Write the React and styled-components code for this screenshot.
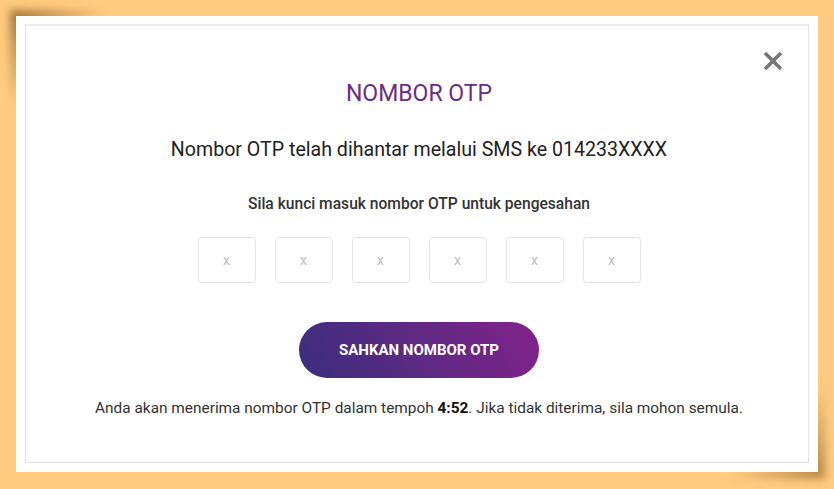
import styled, { createGlobalStyle } from 'styled-components';

const Global = createGlobalStyle`
    html, body {
        margin: 0;
        padding: 0;
        background: #ffcb80;
    }
    body {
        font-family: Roboto, "Liberation Sans", Arial, sans-serif;
    }
`;

const Page = styled.div`
    isolation: isolate;
    width: 834px;
    height: 489px;
    box-sizing: border-box;
    padding: 16px;
    background: #ffcb80;
`;

// white sheet with the lifted corners
const Card = styled.div`
    position: relative;
    width: 802px;
    height: 456px;
    box-sizing: border-box;
    padding: 8px 9px 9px 9px;
    background: #fff;

    &::before,
    &::after {
        content: '';
        position: absolute;
        width: 90px;
        height: 90px;
        z-index: -1;
        filter: blur(4px);
    }
    &::before {
        top: -6px;
        left: -6px;
        background: linear-gradient(135deg, rgba(110, 70, 15, 0.7) 0%, rgba(110, 70, 15, 0) 55%);
    }
    &::after {
        bottom: -7px;
        right: -7px;
        background: linear-gradient(315deg, rgba(110, 70, 15, 0.55) 0%, rgba(110, 70, 15, 0) 55%);
    }
`;

const Frame = styled.div`
    position: relative;
    height: 100%;
    box-sizing: border-box;
    border: 1px solid #e2e2e2;
    border-top: 2px solid #ececec;
    padding: 54px 0 0 4px;
    display: flex;
    flex-direction: column;
    align-items: center;
`;

const Close = styled.button`
    position: absolute;
    top: 25px;
    right: 25px;
    width: 20px;
    height: 20px;
    padding: 0;
    border: none;
    background: none;
    cursor: pointer;
    display: flex;
`;

const Title = styled.h2`
    margin: 0;
    font-size: 23px;
    line-height: 28px;
    font-weight: 400;
    color: #6b2c88;
`;

const Sent = styled.p`
    margin: 30px 0 0;
    font-size: 19.6px;
    line-height: 24px;
    color: #222;
`;

const Hint = styled.p`
    margin: 32px 0 0;
    font-size: 15.6px;
    line-height: 20px;
    font-weight: 500;
    color: #333;
`;

const Digits = styled.div`
    margin-top: 23px;
    display: flex;
    gap: 19px;
`;

const Digit = styled.input`
    width: 58px;
    height: 46px;
    box-sizing: border-box;
    border: 1px solid #e4e4e4;
    border-radius: 4px;
    outline: none;
    text-align: center;
    font-family: inherit;
    font-size: 14px;
    color: #333;
    &::placeholder {
        color: #bdbdbd;
    }
`;

const Submit = styled.button`
    margin-top: 39px;
    width: 240px;
    height: 56px;
    border: none;
    border-radius: 28px;
    background: linear-gradient(60deg, #3a2d7c 0%, #5a2a83 45%, #83228a 100%);
    color: #fff;
    font-family: inherit;
    font-size: 15px;
    font-weight: 700;
    cursor: pointer;
`;

const Note = styled.p`
    margin: 20px 0 0;
    font-size: 15.4px;
    line-height: 20px;
    color: #333;
    b {
        color: #111;
    }
`;

export default function App() {
    const slots = [0, 1, 2, 3, 4, 5];
    return (
        <Page>
            <Global />
            <Card>
                <Frame>
                    <Close aria-label="Tutup">
                        <svg width="20" height="20" viewBox="0 0 20 20">
                            <path d="M2 2 L18 18 M18 2 L2 18" stroke="#777" strokeWidth="3.6" />
                        </svg>
                    </Close>
                    <Title>NOMBOR OTP</Title>
                    <Sent>Nombor OTP telah dihantar melalui SMS ke 014233XXXX</Sent>
                    <Hint>Sila kunci masuk nombor OTP untuk pengesahan</Hint>
                    <Digits>
                        {slots.map((i) => (
                            <Digit key={i} placeholder="x" maxLength={1} />
                        ))}
                    </Digits>
                    <Submit>SAHKAN NOMBOR OTP</Submit>
                    <Note>
                        Anda akan menerima nombor OTP dalam tempoh <b>4:52</b>. Jika tidak diterima, sila mohon semula.
                    </Note>
                </Frame>
            </Card>
        </Page>
    );
}
